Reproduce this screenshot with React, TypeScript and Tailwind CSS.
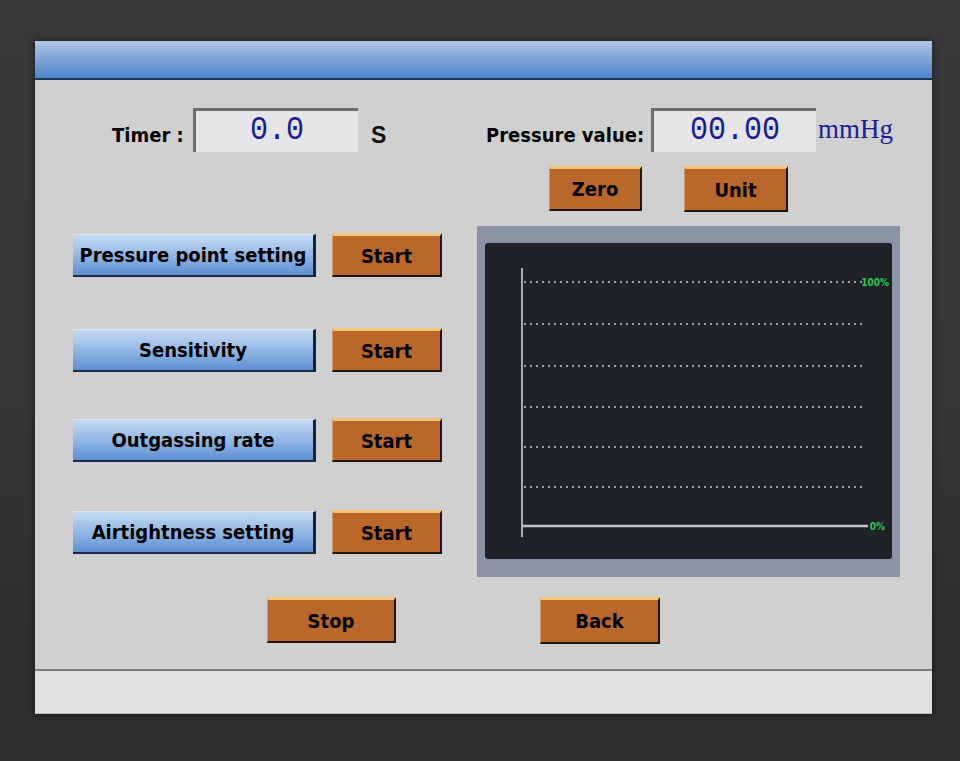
import type { ReactNode } from 'react';

const narrow = "font-['DejaVu_Sans_Condensed','DejaVu_Sans',sans-serif] font-stretch-condensed whitespace-nowrap";

function OrangeButton({ label, className }: { label: string; className: string }) {
  return (
    <button
      className={`flex items-center justify-center bg-[#b9672b] border-t-[3px] border-t-[#f3c67c] border-l border-l-[#d89a5c] border-r-2 border-r-[#1e140c] border-b-2 border-b-[#1e140c] text-[20px] font-bold text-black ${narrow} ${className}`}
    >
      {label}
    </button>
  );
}

function BlueButton({ label }: { label: string }) {
  return (
    <button
      className={`flex w-[243px] h-[43px] items-center justify-center bg-gradient-to-b from-[#c6daf2] via-[#93b8e6] to-[#5d8fd2] border-t border-t-[#dbe8f7] border-r-[3px] border-r-[#172238] border-b-2 border-b-[#1d2a44] text-[20px] font-bold text-black ${narrow}`}
    >
      {label}
    </button>
  );
}

function ReadoutBox({ children }: { children: ReactNode }) {
  return (
    <div className="flex w-[165px] h-[44px] items-center justify-center bg-[#e6e5e7] border-t-[3px] border-t-[#6e6e6e] border-l-[3px] border-l-[#6e6e6e] pb-[2px] font-['Liberation_Mono','DejaVu_Sans_Mono',monospace] text-[30px] text-[#1c1c94]">
      <span className="scale-y-110">{children}</span>
    </div>
  );
}

function TrendChart() {
  const grid = [39, 81, 123, 164, 204, 244];
  return (
    <div className="w-[423px] h-[351px] bg-[#8b93a6] pt-[17px] pl-[8px]">
      <div className="w-[407px] h-[316px] rounded-[3px] bg-[#1f2226]">
        <svg width="407" height="316" viewBox="0 0 407 316">
          {grid.map((y) => (
            <line key={y} x1="39" y1={y} x2="380" y2={y} stroke="#9a9da3" strokeWidth="1.8" strokeDasharray="2 4" />
          ))}
          <line x1="37" y1="25" x2="37" y2="294" stroke="#a9abb0" strokeWidth="2" />
          <line x1="37" y1="283" x2="383" y2="283" stroke="#c0c2c6" strokeWidth="2.5" />
          <text x="404" y="43" textAnchor="end" fill="#2fc55a" fontSize="10" fontWeight="bold" fontFamily="DejaVu Sans Condensed, DejaVu Sans, sans-serif">100%</text>
          <text x="400" y="287" textAnchor="end" fill="#2fc55a" fontSize="10" fontWeight="bold" fontFamily="DejaVu Sans Condensed, DejaVu Sans, sans-serif">0%</text>
        </svg>
      </div>
    </div>
  );
}

export default function App() {
  const modes = ['Pressure point setting', 'Sensitivity', 'Outgassing rate', 'Airtightness setting'];

  return (
    <div className="min-h-screen w-full bg-gradient-to-b from-[#383838] via-[#363636] to-[#2c2c2c] pt-[41px] pl-[35px]">
      <div className="w-[897px] flex flex-col shadow-[0_0_6px_rgba(0,0,0,0.6)]">
        {/* title bar */}
        <div className="h-[39px] bg-gradient-to-b from-[#b2c6e6] via-[#7fa3d8] to-[#4f84ca] border-b-2 border-b-[#1c3558]" />

        {/* main screen */}
        <div className="h-[589px] bg-[#d0d0d0] flex flex-col pt-[28px]">
          <div className="flex items-center h-[44px] pl-[77px]">
            <div className={`w-[81px] pt-[9px] text-[20px] font-bold text-black ${narrow}`}>Timer :</div>
            <ReadoutBox>0.0</ReadoutBox>
            <div className="w-[128px] pl-[13px] pt-[10px] font-['Liberation_Sans',Arial,sans-serif] text-[23px] font-bold text-[#111]">S</div>
            <div className={`w-[165px] pt-[9px] text-[20px] font-bold text-black ${narrow}`}>Pressure value:</div>
            <ReadoutBox>00.00</ReadoutBox>
            <div className="pl-[2px] pb-[1px] font-['Liberation_Serif','Times_New_Roman',serif] text-[27px] text-[#1c1c94]">mmHg</div>
          </div>

          <div className="flex items-start mt-[14px] pl-[514px] gap-[42px]">
            <OrangeButton label="Zero" className="w-[93px] h-[45px]" />
            <OrangeButton label="Unit" className="w-[104px] h-[46px]" />
          </div>

          <div className="flex mt-[14px]">
            <div className="flex flex-col w-[442px] pl-[38px] pt-[7px]">
              {modes.map((m, i) => (
                <div key={m} className={`flex items-center gap-[16px] ${i === 1 ? 'mt-[51px]' : i === 2 ? 'mt-[46px]' : i === 3 ? 'mt-[48px]' : ''}`}>
                  <BlueButton label={m} />
                  <OrangeButton label="Start" className="w-[110px] h-[44px]" />
                </div>
              ))}
            </div>
            <TrendChart />
          </div>

          <div className="flex items-start mt-[20px] pl-[232px] gap-[144px]">
            <OrangeButton label="Stop" className="w-[129px] h-[46px]" />
            <OrangeButton label="Back" className="w-[120px] h-[47px]" />
          </div>
        </div>

        {/* status strip */}
        <div className="h-[2px] bg-[#7d7d7d]" />
        <div className="h-[43px] bg-[#e3e0e3] border-b border-b-[#bbbbbb]" />
      </div>
    </div>
  );
}
